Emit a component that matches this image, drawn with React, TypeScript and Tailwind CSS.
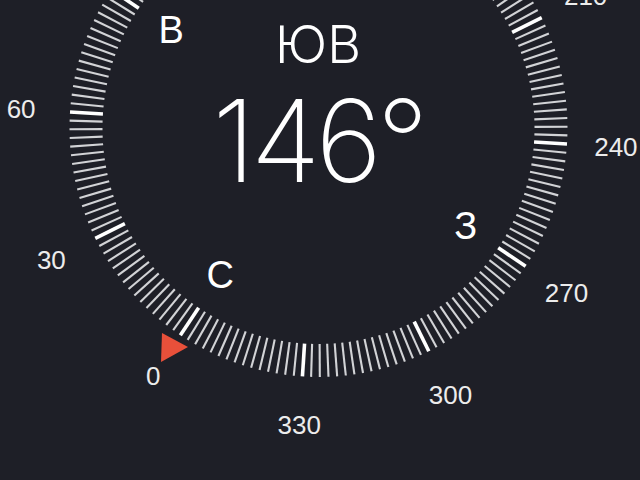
import React from 'react';

const CX = 318.5;
const CY = 128;
const OFFSET = 213.7; // dial rotation, heading 146°

function polar(deg: number, r: number) {
  const a = ((deg + OFFSET) * Math.PI) / 180;
  return { x: CX + Math.sin(a) * r, y: CY - Math.cos(a) * r };
}

const numbers = [0, 30, 60, 90, 120, 150, 180, 210, 240, 270, 300, 330];
const cardinals = [
  { label: 'С', deg: 0 },
  { label: 'В', deg: 90 },
  { label: 'Ю', deg: 180 },
  { label: 'З', deg: 270 },
];

function Dial() {
  const ticks = [];
  for (let d = 0; d < 360; d += 2) {
    const major = d % 30 === 0;
    const a = polar(d, 216);
    const b = polar(d, 249);
    ticks.push(
      <line
        key={d}
        x1={a.x}
        y1={a.y}
        x2={b.x}
        y2={b.y}
        stroke={major ? '#ffffff' : '#d2d3d6'}
        strokeWidth={major ? 3.6 : 2.1}
      />
    );
  }
  return (
    <svg className="absolute inset-0" width="640" height="480" viewBox="0 0 640 480">
      {ticks}
      <polygon points="162,333 161,362 188,347" fill="#e8503a" />
    </svg>
  );
}

export default function App() {
  // only labels that land on screen
  const nums = numbers.map((n) => ({ n, p: polar(n, 298) })).filter((o) => o.p.y > -15);
  const cards = cardinals.map((c) => ({ ...c, p: polar(c.deg, 177) })).filter((o) => o.p.y > 0);

  return (
    <div className="relative w-[640px] h-[480px] overflow-hidden bg-[#1e1f27] text-[#ececec] font-['Liberation_Sans',Arial,sans-serif]">
      <Dial />

      {nums.map(({ n, p }) => (
        <div
          key={n}
          className="absolute -translate-x-1/2 -translate-y-1/2 text-[26px] leading-none"
          style={{ left: p.x, top: p.y }}
        >
          {n}
        </div>
      ))}

      {cards.map((c) => (
        <div
          key={c.label}
          className="absolute -translate-x-1/2 -translate-y-1/2 text-[38px] leading-none text-white"
          style={{ left: c.p.x, top: c.p.y }}
        >
          {c.label}
        </div>
      ))}

      <div className="relative flex flex-col items-center w-[636px] pt-[19px] font-['Inter','Lato',sans-serif] text-white">
        <div className="text-[52px] font-light leading-[52px]">ЮВ</div>
        <div className="text-[114px] font-extralight leading-[100px] tracking-[-5px] mt-[20px]">146°</div>
      </div>
    </div>
  );
}
